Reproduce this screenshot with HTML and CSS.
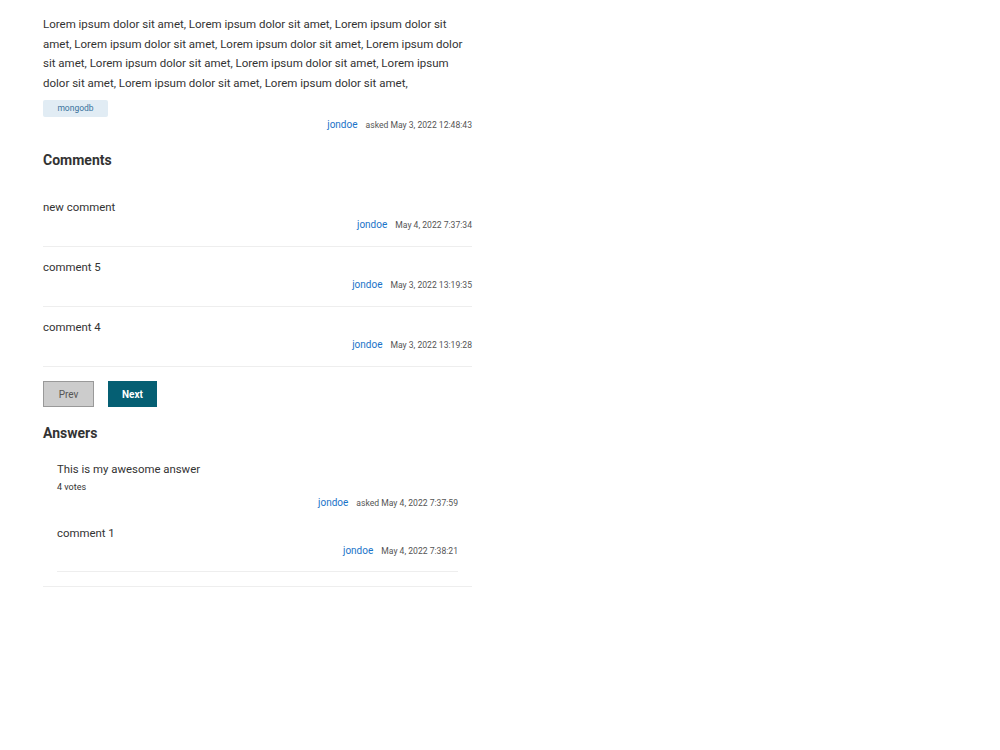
FILE: index.html
```html
<!DOCTYPE html>
<html lang="en">

<head>
  <meta charset="UTF-8" />
  <meta name="viewport" content="width=device-width, initial-scale=1.0" />
  <title>Question</title>
  <link rel="stylesheet" href="styles.css">
</head>

<body>
  <div class="w">
    <!-- question -->
    <div class="stats">
      <span>1 Answers</span>
      <span>10 views</span>
      <span>1 votes</span>
    </div>
    <p class="body">Lorem ipsum dolor sit amet, Lorem ipsum dolor sit amet, Lorem ipsum dolor sit amet, Lorem ipsum dolor sit amet, Lorem ipsum dolor sit amet, Lorem ipsum dolor sit amet, Lorem ipsum dolor sit amet, Lorem ipsum dolor sit amet, Lorem ipsum dolor sit amet, Lorem ipsum dolor sit amet, Lorem ipsum dolor sit amet,</p>
    <div class="tags">
      <span class="tag">mongodb</span>
    </div>
    <div class="meta">
      <a class="user" href="#">jondoe</a>
      <span class="time">asked May 3, 2022 12:48:43</span>
    </div>

    <!-- comments -->
    <h3 class="title">Comments</h3>
    <ul class="comments">
      <li>
        <div class="text">new comment</div>
        <div class="meta">
          <a class="user" href="#">jondoe</a>
          <span class="time">May 4, 2022 7:37:34</span>
        </div>
      </li>
      <li>
        <div class="text">comment 5</div>
        <div class="meta">
          <a class="user" href="#">jondoe</a>
          <span class="time">May 3, 2022 13:19:35</span>
        </div>
      </li>
      <li>
        <div class="text">comment 4</div>
        <div class="meta">
          <a class="user" href="#">jondoe</a>
          <span class="time">May 3, 2022 13:19:28</span>
        </div>
      </li>
    </ul>
    <div class="pager">
      <button class="prev" disabled>Prev</button>
      <button class="next">Next</button>
    </div>

    <!-- answers -->
    <h3 class="title answers-title">Answers</h3>
    <div class="answer">
      <div class="text">This is my awesome answer</div>
      <div class="votes">4 votes</div>
      <div class="meta">
        <a class="user" href="#">jondoe</a>
        <span class="time">asked May 4, 2022 7:37:59</span>
      </div>
      <ul class="comments answer-comments">
        <li>
          <div class="text">comment 1</div>
          <div class="meta">
            <a class="user" href="#">jondoe</a>
            <span class="time">May 4, 2022 7:38:21</span>
          </div>
        </li>
      </ul>
    </div>
  </div>
</body>

</html>
```

FILE: styles.css
```css
* {
  margin: 0;
  padding: 0;
  box-sizing: border-box;
}

body {
  font-family: Roboto, "Liberation Sans", Arial, sans-serif;
  color: #333;
  background: #fff;
}

ul {
  list-style: none;
}

a {
  text-decoration: none;
}

.w {
  width: 429px;
  margin-left: 43px;
}

.stats {
  margin-top: -10px;
  height: 14px;
  line-height: 14px;
  font-size: 10px;
  color: #666;
  display: flex;
  gap: 18px;
}

.body {
  margin-top: 11px;
  font-size: 11.5px;
  line-height: 19.5px;
  color: #333;
}

.tags {
  margin-top: 7px;
  display: flex;
}

.tag {
  width: 65px;
  height: 17px;
  line-height: 17px;
  text-align: center;
  font-size: 8.5px;
  color: #39739d;
  background: #e1ecf4;
  border-radius: 2px;
}

.meta {
  margin-top: 1px;
  display: flex;
  justify-content: flex-end;
  align-items: baseline;
  gap: 8px;
  height: 14px;
  line-height: 14px;
}

.meta .user {
  font-size: 10px;
  color: #1a73c8;
}

.meta .time {
  font-size: 8.6px;
  color: #555;
}

.title {
  margin-top: 20px;
  font-size: 14px;
  line-height: 17px;
  font-weight: bold;
  color: #333;
}

.comments {
  margin-top: 18px;
}

.comments li {
  padding: 12px 0 14px;
  border-bottom: 1px solid #eee;
}

.comments .text {
  font-size: 11.4px;
  line-height: 16px;
}

.comments .meta {
  margin-top: 3px;
}

.pager {
  margin-top: 14px;
  display: flex;
  gap: 14px;
}

.pager button {
  height: 26px;
  font: 10px Roboto, "Liberation Sans", Arial, sans-serif;
  cursor: pointer;
}

.pager .prev {
  width: 51px;
  background: #ccc;
  color: #555;
  border: 1px solid #999;
}

.pager .next {
  width: 49px;
  background: #055f73;
  color: #fff;
  font-weight: bold;
  border: none;
}

.answers-title {
  margin-top: 18px;
}

.answer {
  margin-top: 19px;
  padding: 0 14px 14px;
  border-bottom: 1px solid #eee;
}

.answer > .text {
  font-size: 11.4px;
  line-height: 16px;
}

.answer .votes {
  margin-top: 4px;
  font-size: 9px;
  line-height: 12px;
}

.answer > .meta {
  margin-top: 3px;
}

.answer-comments {
  margin-top: 3px;
}

.answer-comments li {
  padding-bottom: 13px;
}
```
